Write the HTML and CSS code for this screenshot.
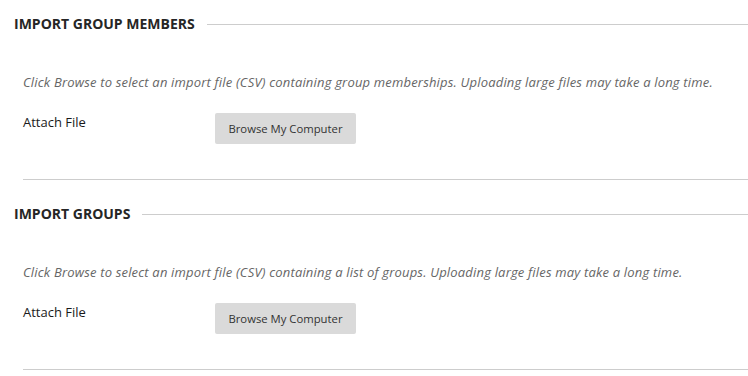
FILE: index.html
```html
<!DOCTYPE html>
<html lang="en">
<head>
    <meta charset="UTF-8">
    <meta name="viewport" content="width=device-width, initial-scale=1.0">
    <title>Import Groups</title>
    <link rel="stylesheet" href="styles.css">
</head>
<body>
    <div class="step">
        <h2 class="step-title">Import Group Members</h2>
        <div class="step-body">
            <p class="instructions">Click Browse to select an import file (CSV) containing group memberships. Uploading large files may take a long time.</p>
            <div class="field">
                <label class="field-label" for="members-file">Attach File</label>
                <button class="browse-btn" id="members-file" type="button">Browse My Computer</button>
            </div>
        </div>
    </div>

    <div class="step">
        <h2 class="step-title">Import Groups</h2>
        <div class="step-body">
            <p class="instructions">Click Browse to select an import file (CSV) containing a list of groups. Uploading large files may take a long time.</p>
            <div class="field">
                <label class="field-label" for="groups-file">Attach File</label>
                <button class="browse-btn" id="groups-file" type="button">Browse My Computer</button>
            </div>
        </div>
    </div>
</body>
</html>
```

FILE: styles.css
```css
:root {
    --text: #262626;
    --muted: #666666;
    --rule: #cdcdcd;
    --button: #dadada;
}

* {
    margin: 0;
    padding: 0;
    box-sizing: border-box;
    font-family: "Open Sans", "Liberation Sans", sans-serif;
}

body {
    background: white;
    color: var(--text);
    padding-left: 14px;
}

.step {
    padding-top: 24px;
}

.step:first-child {
    padding-top: 14px;
}

.step-title {
    display: flex;
    align-items: center;
    gap: 12px;
    font-size: 14px;
    line-height: 20px;
    font-weight: 700;
    text-transform: uppercase;
    color: var(--text);
}

.step-title::after {
    content: "";
    flex: 1;
    height: 1px;
    background: var(--rule);
}

.step-body {
    margin-left: 9px;
    padding-top: 39px;
    padding-bottom: 35px;
    border-bottom: 1px solid var(--rule);
}

.instructions {
    font-size: 13px;
    line-height: 18px;
    letter-spacing: 0.18px;
    font-style: italic;
    color: var(--muted);
    margin-bottom: 22px;
}

.field {
    display: flex;
    align-items: flex-start;
}

.field-label {
    width: 192px;
    font-size: 13px;
    line-height: 18px;
    color: #1a1a1a;
}

.browse-btn {
    width: 141px;
    height: 31px;
    border: none;
    border-radius: 2px;
    background: var(--button);
    color: #333;
    font-size: 11.3px;
    cursor: pointer;
}
```
